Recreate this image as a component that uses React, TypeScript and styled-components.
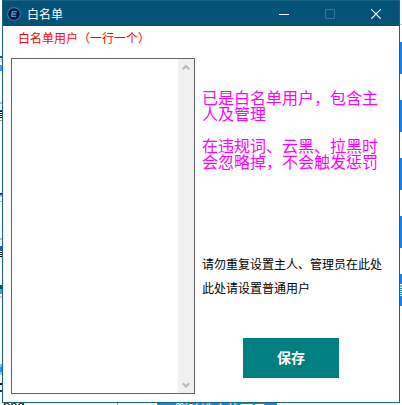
import React from 'react';
import styled, { createGlobalStyle } from 'styled-components';

const Global = createGlobalStyle`
  * { box-sizing: border-box; }
  body { margin: 0; background: #fff; font-family: "Liberation Sans", "Noto Sans CJK SC", sans-serif; overflow: hidden; }
`;

const Desktop = styled.div`
  width: 402px;
  height: 405px;
  display: grid;
  grid-template-columns: 2px 398px 2px;
  grid-template-rows: 403px 2px;
  overflow: hidden;
  background: #fff;
`;

const Edge = styled.div`
  display: flex;
  flex-direction: column;
  overflow: hidden;
`;

const Band = styled.div<{ $h: number; $gap: number; $color: string }>`
  flex: none;
  height: ${p => p.$h}px;
  margin-top: ${p => p.$gap}px;
  background: ${p => p.$color};
`;

const BottomEdge = styled.div`
  grid-column: 1 / 4;
  display: flex;
  overflow: hidden;
  height: 2px;
`;

const FileName = styled.div`
  width: 117px;
  padding-left: 3px;
  font: 13px/13px "Liberation Sans", sans-serif;
  color: #111;
  margin-top: -4px;
`;

const Divider = styled.div`
  width: 40px;
  height: 2px;
  border-left: 1px solid #6d9fb8;
`;

const Selection = styled.div`
  width: 120px;
  height: 14px;
  padding-left: 18px;
  background: #0a84ff;
  color: #fff;
  font: 13px/11px "Noto Sans CJK SC", sans-serif;
  white-space: nowrap;
`;

const Window = styled.main`
  display: flex;
  flex-direction: column;
  background: #fff;
  border: 1px solid #1a6284;
  overflow: hidden;
`;

const TitleBar = styled.header`
  flex: none;
  height: 25px;
  display: flex;
  align-items: center;
  padding-left: 4px;
  background: #055278;
  color: #fff;
`;

const Title = styled.h1`
  flex: 1;
  margin: 0 0 0 6px;
  font: 400 12px/24px "Noto Sans CJK SC", sans-serif;
`;

const WindowButton = styled.button<{ $muted?: boolean }>`
  width: 46px;
  height: 25px;
  padding: 0;
  border: 0;
  background: none;
  display: flex;
  align-items: center;
  justify-content: center;
  color: ${p => (p.$muted ? '#37759a' : '#fff')};
`;

const Controls = styled.div`
  display: flex;
`;

const Content = styled.div`
  flex: 1;
  display: grid;
  grid-template-columns: 184px 189px;
  column-gap: 7px;
  grid-template-rows: 32px 336px;
  padding-left: 8px;
`;

const Heading = styled.label`
  grid-column: 1 / 3;
  padding-left: 7px;
  color: #f00;
  font: 12px/24px "Noto Sans CJK SC", sans-serif;
`;

const ListBox = styled.div`
  display: flex;
  justify-content: flex-end;
  border: 1px solid #646464;
`;

const ScrollBar = styled.div`
  width: 16px;
  background: #f0f0f0;
  display: flex;
  flex-direction: column;
  justify-content: space-between;
  align-items: center;
  padding: 5px 0 4px;
`;

const Side = styled.section`
  display: flex;
  flex-direction: column;
  align-items: flex-start;
`;

const Notice = styled.p`
  margin: 31px 0 0;
  height: 80px;
  color: #f0f;
  font: 16px/16px "Noto Sans CJK SC", sans-serif;
  white-space: pre;
`;

const Hint = styled.p`
  margin: 83px 0 0;
  color: #000;
  font: 12px/24px "Noto Sans CJK SC", sans-serif;
  white-space: pre;
`;

const SaveButton = styled.button`
  width: 96px;
  height: 40px;
  margin: 38px 0 0 41px;
  padding: 0 0 2px;
  border: 0;
  background: #008080;
  color: #fff;
  font: 700 14px/38px "Noto Sans CJK SC", sans-serif;
`;

const Logo = () => (
  <svg width="14" height="14" viewBox="0 0 14 14">
    <circle cx="7" cy="7" r="6.4" fill="#02142f" stroke="#2c7dbb" strokeWidth="1.1" />
    <path d="M4.9 4.7h5M4.6 7h4.6M4.2 9.3h5M5.3 4.2L4.6 9.8" stroke="#3f9be2" strokeWidth="1.3" fill="none" />
  </svg>
);

const Chevron = ({ down }: { down?: boolean }) => (
  <svg width="8" height="7" viewBox="0 0 8 7" fill="none">
    <path d={down ? 'M.7 1.2L4 4.5l3.3-3.3' : 'M.7 5.3L4 2l3.3 3.3'} stroke="#b9b9b9" strokeWidth="2.2" />
  </svg>
);

type BandSpec = [gap: number, height: number, color: string];

const leftBands: BandSpec[] = [
  [56, 2, '#17668c'], [1, 1, '#a9c4d4'], [1, 1, '#f4b8b8'], [3, 6, '#3c9fff'], [31, 2, '#a8c4d4'],
  [6, 1, '#104f9f'], [0, 1, '#111'], [1, 1, '#111'], [1, 1, '#111'], [1, 1, '#111'], [2, 1, '#c98a4a'],
  [72, 2, '#17547a'], [0, 2, '#b6b0ff'], [4, 1, '#bbb'], [36, 2, '#a8c8dc'], [6, 5, '#1d5cb8'],
  [1, 1, '#111'], [1, 1, '#111'], [1, 1, '#111'], [28, 4, '#055278'], [0, 5, '#4ba3f5'],
  [2, 2, '#f4b8b8'], [66, 3, '#79bdf8'], [0, 5, '#2391ff'], [0, 3, '#9acbf8'], [8, 2, '#222'],
  [5, 2, '#333'],
];

const rightBands: BandSpec[] = [
  [24, 1, '#c9ced2'], [17, 32, '#0a84ff'], [26, 32, '#0a84ff'], [26, 32, '#0a84ff'],
  [26, 32, '#0a84ff'], [26, 10, '#0a84ff'], [1, 2, '#54bdfc'], [1, 1, '#0a84ff'],
  [1, 1, '#0a84ff'], [1, 1, '#0a84ff'], [1, 1, '#0a84ff'], [1, 10, '#0a84ff'],
];

const Bands = ({ items }: { items: BandSpec[] }) => (
  <Edge>
    {items.map(([gap, h, color], i) => <Band key={i} $gap={gap} $h={h} $color={color} />)}
  </Edge>
);

export default function App() {
  return (
    <>
      <Global />
      <Desktop>
        <Bands items={leftBands} />
        <Window>
          <TitleBar>
            <Logo />
            <Title>白名单</Title>
            <Controls>
              <WindowButton aria-label="最小化">
                <svg width="10" height="10"><path d="M0 5.5h10" stroke="currentColor" /></svg>
              </WindowButton>
              <WindowButton $muted aria-label="最大化">
                <svg width="10" height="10"><path d="M.5.5h9v9h-9z" fill="none" stroke="currentColor" /></svg>
              </WindowButton>
              <WindowButton aria-label="关闭">
                <svg width="10" height="10"><path d="M.3.3l9.4 9.4M9.7.3L.3 9.7" stroke="currentColor" strokeWidth="1.2" /></svg>
              </WindowButton>
            </Controls>
          </TitleBar>
          <Content>
            <Heading>白名单用户（一行一个）</Heading>
            <ListBox>
              <ScrollBar>
                <Chevron />
                <Chevron down />
              </ScrollBar>
            </ListBox>
            <Side>
              <Notice>{'已是白名单用户，包含主\n人及管理\n\n在违规词、云黑、拉黑时\n会忽略掉，不会触发惩罚'}</Notice>
              <Hint>{'请勿重复设置主人、管理员在此处\n此处请设置普通用户'}</Hint>
              <SaveButton>保存</SaveButton>
            </Side>
          </Content>
        </Window>
        <Bands items={rightBands} />
        <BottomEdge>
          <FileName>png</FileName>
          <Divider />
          <Selection>删除选中的项目</Selection>
        </BottomEdge>
      </Desktop>
    </>
  );
}
